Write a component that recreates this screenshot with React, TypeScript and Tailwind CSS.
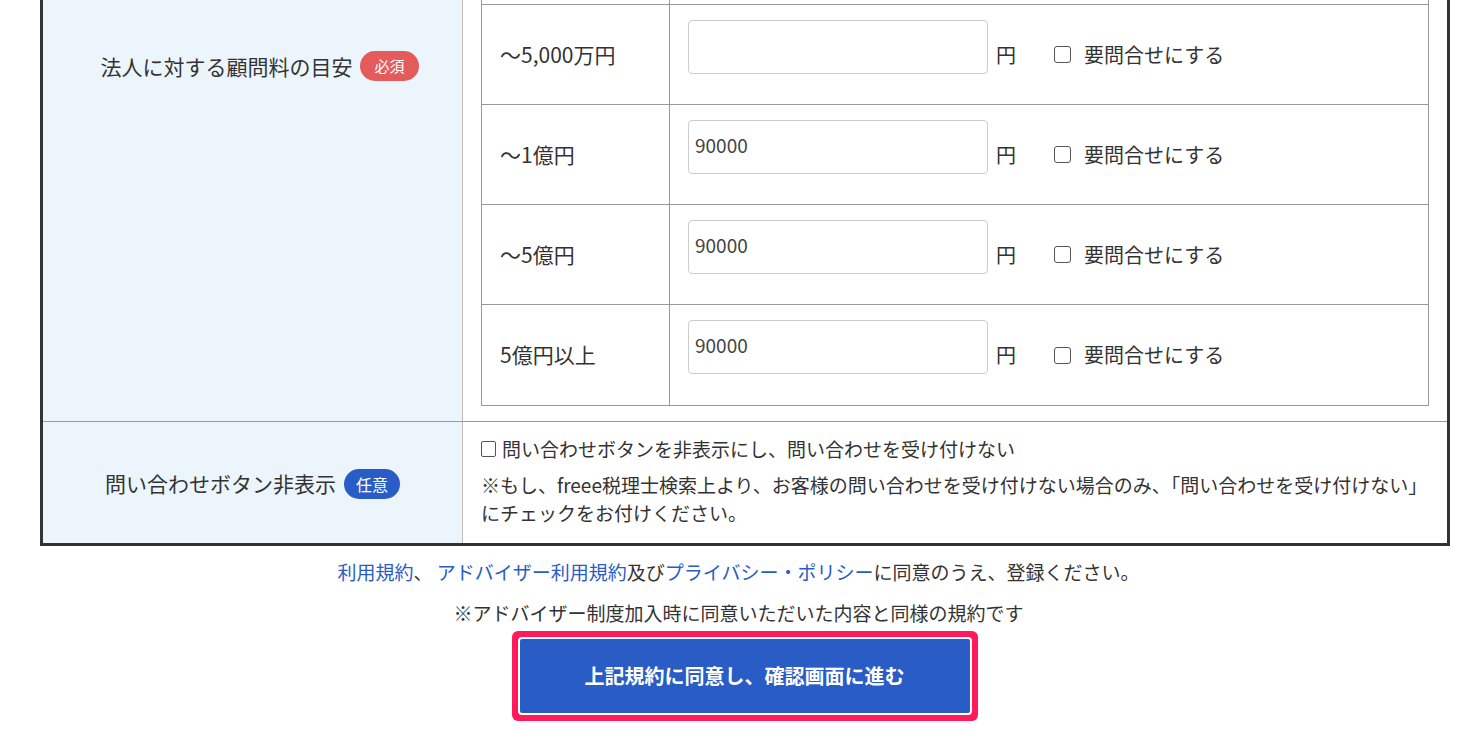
const rows = [
  { label: '', value: '' },
  { label: '～5,000万円', value: '' },
  { label: '～1億円', value: '90000' },
  { label: '～5億円', value: '90000' },
  { label: '5億円以上', value: '90000' },
]

function FeeRow({ label, value }: { label: string; value: string }) {
  return (
    <div className="flex h-[100px] border-b border-[#999] last:border-b-0">
      <div className="w-[188px] border-r border-[#999] flex items-center pl-[18px] text-[21px] text-[#333]">{label}</div>
      <div className="flex-1 flex items-center pl-[18px]">
        {label && (
          <>
            <input
              defaultValue={value}
              className="w-[300px] h-[54px] border border-[#ccc] rounded-[4px] px-[6px] pb-[6px] text-[19px] text-[#444] outline-none self-start mt-[15px] leading-none"
            />
            <span className="ml-[8px] text-[20px] text-[#333]">円</span>
            <span className="ml-[38px] w-[17px] h-[17px] border border-[#555] rounded-[3px] bg-white" />
            <span className="ml-[13px] text-[20px] text-[#333]">要問合せにする</span>
          </>
        )}
      </div>
    </div>
  )
}

export default function App() {
  return (
    <div className="w-[1483px] h-[745px] overflow-hidden bg-white" style={{ fontFamily: '"Noto Sans CJK JP", "Noto Sans", sans-serif' }}>
      <div className="-mt-[95px] mx-[40px] w-[1410px] border-x-[3px] border-b-[3px] border-[#333]">
        <div className="flex border-b border-[#999]">
          <div className="w-[420px] bg-[#ecf5fc] border-r border-[#bbb] flex items-start justify-center pl-[14px] text-[21px] text-[#333] gap-[8px] pt-[146px]">
            法人に対する顧問料の目安
            <span className="bg-[#e35b5b] text-white text-[15px] rounded-full px-[14px] h-[30px] flex items-center">必須</span>
          </div>
          <div className="flex-1 px-[18px] pb-[15px]">
            <div className="border-x border-b border-[#999]">
              {rows.map((r, i) => <FeeRow key={i} {...r} />)}
            </div>
          </div>
        </div>
        <div className="flex h-[121px]">
          <div className="w-[420px] bg-[#ecf5fc] border-r border-[#bbb] flex items-center justify-center text-[21px] text-[#333] gap-[8px] pt-[2px]">
            問い合わせボタン非表示
            <span className="bg-[#2a5cc6] text-white text-[16px] rounded-full px-[12px] h-[30px] flex items-center">任意</span>
          </div>
          <div className="flex-1 px-[18px] pt-[13px] text-[19px] text-[#333] leading-[28px]">
            <div className="flex items-center gap-[6px]">
              <span className="w-[15px] h-[16px] border border-[#555] rounded-[2px]" />
              問い合わせボタンを非表示にし、問い合わせを受け付けない
            </div>
            <p className="mt-[8px]">※もし、freee税理士検索上より、お客様の問い合わせを受け付けない場合のみ、「問い合わせを受け付けない」にチェックをお付けください。</p>
          </div>
        </div>
      </div>
      <p className="text-center text-[19px] text-[#333] mt-[12px] ml-[-6px]">
        <span className="text-[#2a5cc6]">利用規約</span>、 <span className="text-[#2a5cc6]">アドバイザー利用規約</span>及び<span className="text-[#2a5cc6]">プライバシー・ポリシー</span>に同意のうえ、登録ください。
      </p>
      <p className="text-center text-[19px] text-[#333] mt-[12px] ml-[-6px]">※アドバイザー制度加入時に同意いただいた内容と同様の規約です</p>
      <div className="flex justify-center mt-[4px] ml-[6px]">
        <div className="w-[466px] h-[90px] bg-[#ff1a5b] rounded-[6px] p-[6px]">
          <div className="w-full h-full bg-[#2a5cc6] border-2 border-white rounded-[4px] flex items-center justify-center text-white text-[20px] font-bold">
            上記規約に同意し、確認画面に進む
          </div>
        </div>
      </div>
    </div>
  )
}
